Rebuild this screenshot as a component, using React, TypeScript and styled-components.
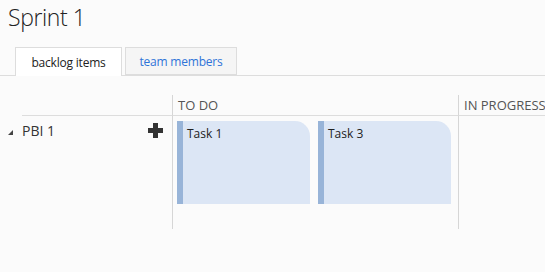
import styled, { createGlobalStyle } from "styled-components";

const GlobalStyle = createGlobalStyle`
  html, body {
    margin: 0;
    padding: 0;
    background: #fbfbfb;
    font-family: "Open Sans", "Noto Sans", sans-serif;
    color: #222;
  }
`;

const Page = styled.div`
  width: 545px;
  height: 272px;
  overflow: hidden;
`;

const Title = styled.h1`
  margin: 0;
  padding: 2px 0 0 8px;
  font-size: 23px;
  font-weight: 300;
  line-height: 30px;
  color: #222;
  letter-spacing: -0.4px;
`;

const TabBar = styled.div`
  display: flex;
  gap: 3px;
  margin-top: 15px;
  padding-left: 15px;
  border-bottom: 1px solid #ddd;
  height: 28px;
`;

const Tab = styled.div<{ $active?: boolean }>`
  display: flex;
  align-items: center;
  justify-content: center;
  width: ${(p) => (p.$active ? 107 : 112)}px;
  height: ${(p) => (p.$active ? 29 : 28)}px;
  box-sizing: border-box;
  border: 1px solid #ddd;
  border-bottom: ${(p) => (p.$active ? "none" : "1px solid #ddd")};
  background: ${(p) => (p.$active ? "#fff" : "#f5f5f5")};
  color: ${(p) => (p.$active ? "#222" : "#2f74d8")};
  font-size: 12px;
  letter-spacing: -0.2px;
`;

const Board = styled.div`
  display: grid;
  grid-template-columns: 150px 286px 1fr;
  margin: 19px 0 0 22px;
`;

const HeadCell = styled.div<{ $line?: boolean }>`
  height: 21px;
  box-sizing: border-box;
  border-bottom: 1px solid #ddd;
  border-left: ${(p) => (p.$line ? "1px solid #d6d6d6" : "none")};
  padding: 1px 0 0 5px;
  font-size: 13px;
  line-height: 18px;
  color: #555;
  white-space: nowrap;
`;

const RowHeader = styled.div`
  display: flex;
  align-items: flex-start;
  justify-content: space-between;
  padding: 5px 9px 0 0;
`;

const RowName = styled.div`
  position: relative;
  font-size: 14px;
  line-height: 20px;
  color: #333;
`;

const Toggle = styled.svg`
  position: absolute;
  left: -14px;
  top: 9px;
`;

const Column = styled.div<{ $line?: boolean }>`
  display: flex;
  gap: 8px;
  padding: 5px 0 25px 4px;
  border-left: ${(p) => (p.$line ? "1px solid #d6d6d6" : "none")};
`;

const Card = styled.div`
  width: 133px;
  height: 83px;
  box-sizing: border-box;
  background: #dce6f5;
  border-left: 6px solid #98b4d8;
  border-top-right-radius: 15px;
  padding: 4px 0 0 4px;
  font-size: 12px;
  color: #222;
`;

export default function App() {
  return (
    <Page>
      <GlobalStyle />
      <Title>Sprint 1</Title>
      <TabBar>
        <Tab $active>backlog items</Tab>
        <Tab>team members</Tab>
      </TabBar>
      <Board>
        <HeadCell />
        <HeadCell $line>TO DO</HeadCell>
        <HeadCell $line>IN PROGRESS</HeadCell>
        <RowHeader>
          <RowName>
            <Toggle width="5" height="5" viewBox="0 0 5 5">
              <polygon points="5,0 5,5 0,5" fill="#444" />
            </Toggle>
            PBI 1
          </RowName>
          <svg width="15" height="15" viewBox="0 0 15 15" style={{ marginTop: 2 }}>
            <path d="M5 0h5v5h5v5h-5v5h-5v-5h-5v-5h5z" fill="#333" />
          </svg>
        </RowHeader>
        <Column $line>
          <Card>Task 1</Card>
          <Card>Task 3</Card>
        </Column>
        <Column $line />
      </Board>
    </Page>
  );
}
